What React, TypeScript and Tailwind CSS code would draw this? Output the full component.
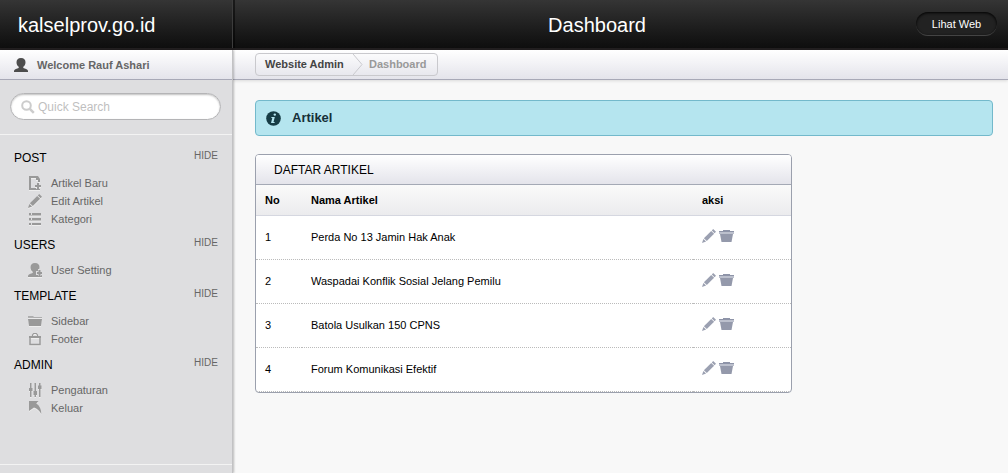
import React from "react";

interface IconProps {
  className?: string;
}

const UserIcon = ({ className }: IconProps) => (
  <svg viewBox="0 0 14 14" className={className} fill="currentColor" aria-hidden="true">
    <path d="M7 0C4 0 2.500 1.800 2.500 4.200c0 2 .9 3.800 2.200 4.600v1.100C3 10.600.4 11.200 0 12.800V14h14v-1.200c-.4-1.600-3-2.200-4.700-2.900V8.800c1.300-.8 2.200-2.600 2.200-4.600C11.500 1.800 10 0 7 0z" />
  </svg>
);

const SearchIcon = ({ className }: IconProps) => (
  <svg viewBox="0 0 14 14" className={className} fill="none" stroke="currentColor" aria-hidden="true">
    <circle cx="5.500" cy="5.500" r="4.300" strokeWidth="2" />
    <path d="M8.800 8.800l4 4" strokeWidth="2.500" />
  </svg>
);

const NewArticleIcon = ({ className }: IconProps) => (
  <svg viewBox="0 0 14 14" className={className} fill="currentColor" aria-hidden="true">
    <path d="M1 0h9l2 3v3h-2V4H8V2H3v10h5v2H1z" />
    <path d="M9 7h2v2h2v2h-2v2H9v-2H7V9h2z" />
    <path d="M8 13h4v1H8z" />
  </svg>
);

const PencilIcon = ({ className }: IconProps) => (
  <svg viewBox="0 0 14 14" className={className} fill="currentColor" aria-hidden="true">
    <path d="M11.200 0L14 2.800l-1.400 1.400-2.800-2.800z" />
    <path d="M9.200 1.900l2.900 2.900-7.300 7.300-2.900-2.900z" />
    <path d="M1.400 9.900l2.700 2.700L0 14z" />
  </svg>
);

const ListIcon = ({ className }: IconProps) => (
  <svg viewBox="0 0 14 14" className={className} fill="currentColor" aria-hidden="true">
    <path d="M1 1h2v2H1zM4 1h9v2H4zM1 6h2v2H1zM4 6h9v2H4zM1 11h2v2H1zM4 11h9v2H4z" />
    <path d="M1 3h12v1H1zM1 8h12v1H1z" opacity="0.5" />
  </svg>
);

const UserAddIcon = ({ className }: IconProps) => (
  <svg viewBox="0 0 14 14" className={className} fill="currentColor" aria-hidden="true">
    <path d="M7 0C4 0 2.500 1.800 2.500 4.200c0 2 .9 3.800 2.200 4.600v1.100C3 10.600.4 11.200 0 12.800V14h14v-1.200c-.4-1.600-3-2.200-4.700-2.900V8.800c1.300-.8 2.200-2.600 2.200-4.600C11.500 1.800 10 0 7 0z" />
    <path d="M10 6h3v2h1v4h-1v1h-3v-1H8V8h2z" fill="#dedee0" />
    <path d="M10.500 7h2v2H14v2h-1.500v2h-2v-2H9V9h1.500z" />
  </svg>
);

const FolderIcon = ({ className }: IconProps) => (
  <svg viewBox="0 0 14 14" className={className} fill="currentColor" aria-hidden="true">
    <path d="M0 2h5l1 1h8v1H0z" opacity="0.7" />
    <path d="M0 5h14l-1 7H1z" />
  </svg>
);

const BagIcon = ({ className }: IconProps) => (
  <svg viewBox="0 0 14 14" className={className} fill="none" stroke="currentColor" aria-hidden="true">
    <path d="M2 5h10v7.500H2z" strokeWidth="1.500" />
    <path d="M1 5h12" strokeWidth="2" />
    <path d="M4.500 4V3l1.200-1.500h2.600L9.500 3v1" strokeWidth="1.200" />
  </svg>
);

const SlidersIcon = ({ className }: IconProps) => (
  <svg viewBox="0 0 14 14" className={className} fill="currentColor" aria-hidden="true">
    <path d="M2 0h1.500v14H2zM6.500 0H8v14H6.500zM11 0h1.500v14H11z" />
    <path d="M1 5h3.500v3H1zM5.500 8h3.500v4H5.500zM10 2.500h3.500V6H10z" />
  </svg>
);

const ExitIcon = ({ className }: IconProps) => (
  <svg viewBox="0 0 14 14" className={className} fill="currentColor" aria-hidden="true">
    <path d="M1 0h9.500L8.300 2.500c3.200 2 5 5.500 5 10.500-1.800-3.500-4-5.300-7.300-6.500L1 10z" />
  </svg>
);

const TrashIcon = ({ className }: IconProps) => (
  <svg viewBox="0 0 15 14" className={className} aria-hidden="true">
    <path d="M4 1h7v1h4v1H0V2h4z" fill="#8e94a8" />
    <path d="M0 3h15v2H0z" fill="#bcc0cd" />
    <path d="M1 5h13l-1.500 8h-10z" fill="#9499ab" />
  </svg>
);

const InfoIcon = ({ className }: IconProps) => (
  <svg viewBox="0 0 15 15" className={className} aria-hidden="true">
    <circle cx="7.500" cy="7.500" r="7.300" fill="#163c45" />
    <circle cx="8.800" cy="3.600" r="1.200" fill="#b5e5ef" />
    <path d="M5.500 6h3.300l-1.300 5h1.300l-.4 1H5l1.300-5H5.200z" fill="#b5e5ef" />
  </svg>
);

const menu = [
  {
    title: "POST",
    items: [
      { label: "Artikel Baru", Icon: NewArticleIcon },
      { label: "Edit Artikel", Icon: PencilIcon },
      { label: "Kategori", Icon: ListIcon },
    ],
  },
  { title: "USERS", items: [{ label: "User Setting", Icon: UserAddIcon }] },
  {
    title: "TEMPLATE",
    items: [
      { label: "Sidebar", Icon: FolderIcon },
      { label: "Footer", Icon: BagIcon },
    ],
  },
  {
    title: "ADMIN",
    items: [
      { label: "Pengaturan", Icon: SlidersIcon },
      { label: "Keluar", Icon: ExitIcon },
    ],
  },
];

const articles = [
  "Perda No 13 Jamin Hak Anak",
  "Waspadai Konflik Sosial Jelang Pemilu",
  "Batola Usulkan 150 CPNS",
  "Forum Komunikasi Efektif",
];

const Header = () => (
  <header className="flex h-[50px] border-b-2 border-[#221f20] bg-linear-to-b from-[#353535] to-[#0e0e0e] text-white">
    <h1 className="flex w-[233px] shrink-0 items-center border-r border-[#3c3c3c] pt-[2px] pl-[18px] text-xl">
      <a href="#home">kalselprov.go.id</a>
    </h1>
    <div className="flex flex-1 items-center border-l-2 border-black/50 pr-[11px]">
      <h2 className="flex-1 pt-[2px] pl-[43px] text-center text-xl">Dashboard</h2>
      <a
        href="#web"
        className="flex h-6 w-[81px] items-center justify-center rounded-full border-b border-[#444] bg-[#222] pt-[2px] text-[11px] shadow-[inset_0_1px_3px_#000]"
      >
        Lihat Web
      </a>
    </div>
  </header>
);

const Sidebar = () => (
  <aside className="z-10 w-[233px] shrink-0 border-r border-[#c2c2c4] bg-[#dedee0] shadow-[1px_0_2px_rgba(0,0,0,0.25)]">
    <div className="flex h-[30px] items-center gap-[9px] border-b border-[#a8a9b7] bg-linear-to-b from-white to-[#e4e4eb] pt-px pl-[14px] text-[11px] font-bold text-[#666]">
      <UserIcon className="h-[14px] w-[14px] text-[#4d4d4d]" />
      <p>Welcome Rauf Ashari</p>
    </div>

    <form className="border-b border-[#f3f3f3] pt-[13px] pr-[11px] pb-[14px] pl-[10px]">
      <label className="flex h-[27px] items-center gap-[3px] rounded-full border border-[#b4b4b6] bg-white pr-3 pl-[10px] shadow-[inset_0_1px_2px_rgba(0,0,0,0.25)]">
        <SearchIcon className="h-[14px] w-[14px] shrink-0 text-[#ccc]" />
        <input
          type="text"
          aria-label="Quick Search"
          placeholder="Quick Search"
          className="w-full min-w-0 bg-transparent text-xs outline-none placeholder:text-[#bfbfbf]"
        />
      </label>
    </form>

    <nav className="border-b border-[#f3f3f3] pt-[6px] pb-[47px]">
      {menu.map(({ title, items }) => (
        <section key={title}>
          <div className="flex h-[33px] items-center justify-between px-[14px]">
            <h3 className="text-xs font-medium text-black">{title}</h3>
            <button type="button" className="pb-1 text-[10px] text-[#666]">
              HIDE
            </button>
          </div>
          <ul>
            {items.map(({ label, Icon }) => (
              <li key={label}>
                <a href="#menu" className="flex h-[18px] items-center gap-[9px] pl-7 text-[11px] text-[#666]">
                  <Icon className="h-[14px] w-[14px] text-[#999] drop-shadow-[0_1px_0_#eee]" />
                  {label}
                </a>
              </li>
            ))}
          </ul>
        </section>
      ))}
    </nav>
  </aside>
);

const Breadcrumbs = () => (
  <nav
    aria-label="Breadcrumb"
    className="flex h-[30px] items-center border-b border-[#a8a9b7] bg-linear-to-b from-white to-[#e4e4eb] pl-[22px] shadow-[0_1px_3px_rgba(0,0,0,0.12)]"
  >
    <div className="flex h-[23px] items-center rounded border border-[#c9c9cd] px-[9px] text-[11px] font-bold">
      <a href="#admin" className="w-[88px] text-[#444]">
        Website Admin
      </a>
      <svg viewBox="0 0 10 21" className="mr-[6px] h-[21px] w-[10px]" fill="none" aria-hidden="true">
        <path d="M0 0l9 10.500L0 21" stroke="#c9c9cd" />
      </svg>
      <span className="w-[59px] text-[#999]">Dashboard</span>
    </div>
  </nav>
);

const ArticleTable = () => (
  <section className="mt-[18px] w-[537px] max-w-full overflow-hidden rounded border border-[#9ba0ad] bg-white">
    <h3 className="flex h-[30px] items-center border-b border-[#a4a9b5] bg-linear-to-b from-white to-[#e4e4eb] pl-[18px] text-xs text-black">
      DAFTAR ARTIKEL
    </h3>
    <table className="w-full table-fixed border-separate border-spacing-0 text-left text-[11px] text-black">
      <thead>
        <tr className="h-[31px] bg-linear-to-b from-[#fafafa] to-[#ebebed]">
          <th className="w-[46px] border-b border-[#d5d7e0] px-[9px]">No</th>
          <th className="border-b border-[#d5d7e0] px-[9px]">Nama Artikel</th>
          <th className="w-[98px] border-b border-[#d5d7e0] px-[9px]">aksi</th>
        </tr>
      </thead>
      <tbody>
        {articles.map((name, i) => (
          <tr key={name} className="h-[44px] *:border-b *:border-dotted *:border-[#bbb] *:px-[9px]">
            <td>{i + 1}</td>
            <td>{name}</td>
            <td>
              <div className="flex items-center gap-[3px] pb-1">
                <button type="button" aria-label="Edit">
                  <PencilIcon className="h-[14px] w-[14px] text-[#9ba0b1]" />
                </button>
                <button type="button" aria-label="Hapus">
                  <TrashIcon className="h-[14px] w-[15px]" />
                </button>
              </div>
            </td>
          </tr>
        ))}
      </tbody>
    </table>
  </section>
);

const App = () => {
  return (
    <div className="flex min-h-screen flex-col bg-[#f8f8f8] font-['Liberation_Sans',Arial,sans-serif]">
      <Header />
      <div className="flex flex-1">
        <Sidebar />
        <div className="min-w-0 flex-1">
          <Breadcrumbs />
          <main className="pt-5 pr-[15px] pl-[22px]">
            <div className="flex h-9 items-center gap-[11px] rounded border border-[#73b9cb] bg-[#b5e5ef] pl-[10px] text-[13px] font-bold text-[#163039]">
              <InfoIcon className="h-[15px] w-[15px]" />
              <p>Artikel</p>
            </div>
            <ArticleTable />
          </main>
        </div>
      </div>
    </div>
  );
};

export default App;
